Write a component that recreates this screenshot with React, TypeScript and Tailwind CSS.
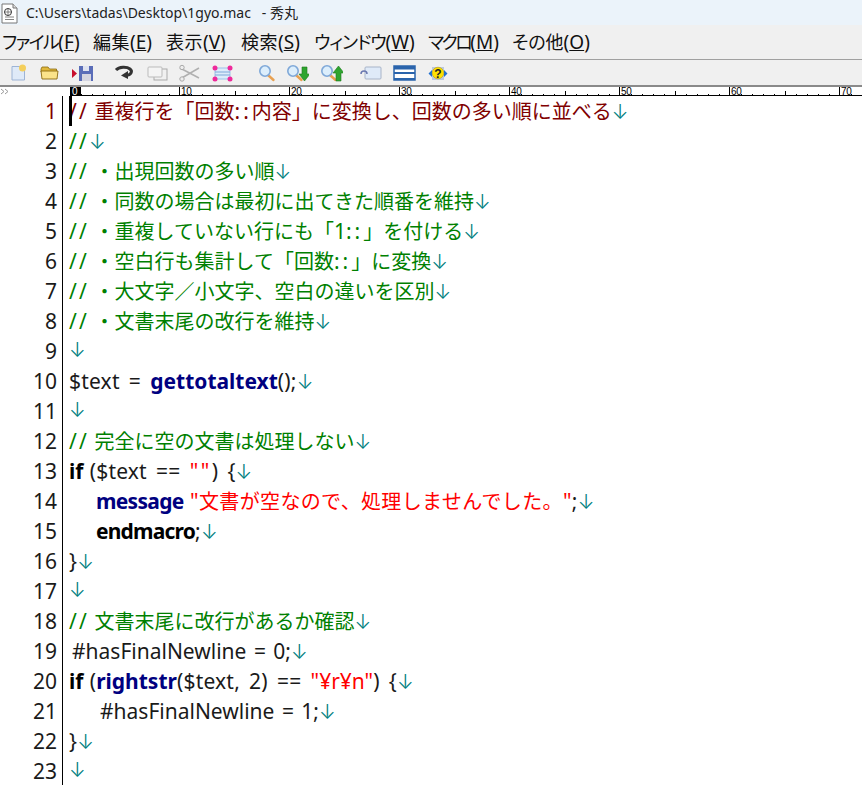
import React from "react";

const FONT = '"Noto Sans","Noto Sans CJK JP",sans-serif';

type Seg = [string, string];
const G = "text-[#008000]";
const K = "text-[#000080] font-bold";
const KM = "text-[#000080] font-bold tracking-[-0.7px]";
const T = "text-[#1a1a1a] tracking-[0.2px] [word-spacing:3.5px]";
const T0 = "text-[#1a1a1a] [word-spacing:1px]";
const TH = "text-[#1a1a1a] [word-spacing:2px]";
const B = "text-[#000] font-bold";
const BE = "text-[#000] font-bold tracking-[-0.8px]";
const R = "text-[#ff0000]";
const RE = "text-[#ff0000] tracking-[2.5px]";
const RL = "text-[#ff0000] tracking-[0.35px]";
const D = "text-[#800000]";

const rows: { segs: Seg[]; pad?: string; dark?: boolean }[] = [
  { segs: [["// 重複行を「回数::内容」に変換し、回数の多い順に並べる", D]], dark: true },
  { segs: [["//", G]] },
  { segs: [["// ・出現回数の多い順", G]] },
  { segs: [["// ・同数の場合は最初に出てきた順番を維持", G]] },
  { segs: [["// ・重複していない行にも「1::」を付ける", G]] },
  { segs: [["// ・空白行も集計して「回数::」に変換", G]] },
  { segs: [["// ・大文字／小文字、空白の違いを区別", G]] },
  { segs: [["// ・文書末尾の改行を維持", G]] },
  { segs: [] },
  { segs: [["$text = ", T], ["gettotaltext", K], ["();", T]] },
  { segs: [] },
  { segs: [["// 完全に空の文書は処理しない", G]] },
  { segs: [["if", B], [" (", T0], ["$text == ", T], ['""', RE], [") {", T]] },
  { segs: [["message", KM], [" ", T0], ['"文書が空なので、処理しませんでした。"', RL], [";", T]], pad: "pl-[27px]" },
  { segs: [["endmacro", BE], [";", T]], pad: "pl-[27px]" },
  { segs: [["}", T]] },
  { segs: [] },
  { segs: [["// 文書末尾に改行があるか確認", G]] },
  { segs: [["#hasFinalNewline = 0;", TH]], pad: "pl-[3px]" },
  { segs: [["if", B], [" (", T0], ["rightstr", K], ["($text, 2) == ", T], ['"¥r¥n"', R], [") {", T]] },
  { segs: [["#hasFinalNewline = 1;", TH]], pad: "pl-[31px]" },
  { segs: [["}", T]] },
  { segs: [] },
];

const menus: [string, string, string, string][] = [
  ["ファイル", "F", "w-[91px]", "tracking-[-1.5px]"],
  ["編集", "E", "w-[73px]", "tracking-[0.5px]"],
  ["表示", "V", "w-[75px]", "tracking-[0.5px]"],
  ["検索", "S", "w-[73px]", "tracking-[0.5px]"],
  ["ウィンドウ", "W", "w-[114px]", "tracking-[-1px]"],
  ["マクロ", "M", "w-[84px]", "tracking-[-2.5px]"],
  ["その他", "O", "w-[80px]", "tracking-normal"],
];

function Mixed({ text }: { text: string }) {
  const parts = text.match(/\/\/|::|[\x00-\x7F¥]+?(?=::|$|[^\x00-\x7F¥])|[^\x00-\x7F¥]+/g) || [];
  return (
    <>
      {parts.map((p, i) =>
        p === "//" ? (
          <span key={i} className="text-[21px] tracking-[2.2px]">{p}</span>
        ) : p === "::" ? (
          <span key={i} className="text-[21px] tracking-[3px]">{p}</span>
        ) : /^[\x00-\x7F¥]/.test(p) ? (
          <span key={i} className="text-[21px]">{p}</span>
        ) : (
          <span key={i} className="text-[20px]">{p}</span>
        )
      )}
    </>
  );
}

function Ruler() {
  const ticks = [];
  for (let i = 1; i <= 72; i++) {
    const x = 70 + i * 11;
    if (x > 862) break;
    if (i % 10 === 0) continue;
    const h = i % 5 === 0 ? 5 : 2;
    ticks.push(<line key={i} x1={x + 0.5} x2={x + 0.5} y1={9 - h} y2={9} stroke="#000" />);
  }
  const labels = [];
  for (let i = 0; i <= 70; i += 10) {
    const x = 70 + i * 11;
    labels.push(
      <g key={i}>
        {i > 0 && <line x1={x - 0.5} x2={x - 0.5} y1={0} y2={9} stroke="#000" />}
        <text x={x + (i === 0 ? 2 : 1)} y={8} fontSize="10" fill={i === 0 ? "#fff" : "#000"} fontFamily="Liberation Sans" letterSpacing="-0.3">
          {i}
        </text>
      </g>
    );
  }
  return (
    <svg width="862" height="9" className="block">
      <rect x="70" y="0" width="11" height="9" fill="#000" />
      <line x1="70" x2="862" y1="8.5" y2="8.5" stroke="#000" />
      {ticks}
      {labels}
      <path d="M1 2l3 2.500-3 2.500M5 2l3 2.500-3 2.500" fill="none" stroke="#999" />
    </svg>
  );
}

const Ic = ({ children, ml }: { children: React.ReactNode; ml: string }) => (
  <svg width="24" height="24" viewBox="0 0 24 24" className={`block shrink-0 ${ml}`}>
    {children}
  </svg>
);

const Mag = ({ x = 0 }: { x?: number }) => (
  <g transform={`translate(${x} 0)`}>
    <line x1="13.5" y1="14.5" x2="18.5" y2="19" stroke="#e8a050" strokeWidth="2.4" strokeLinecap="round" />
    <circle cx="10" cy="10" r="5.2" fill="#dceefc" stroke="#7fa8d8" strokeWidth="1.6" />
  </g>
);

function Toolbar() {
  return (
    <div className="flex h-[25px] items-center bg-[#f0f0f0]">
      <Ic ml="ml-[6px]">
        <path d="M6 5.500h9l3.500 3v10.500H6z" fill="#dfeaf8" stroke="#9db4d6" />
        <circle cx="16.500" cy="7" r="3.500" fill="#f4cf5c" />
      </Ic>
      <Ic ml="ml-[8px]">
        <path d="M3 8l1-2h6l1.500 2h7v3H3z" fill="#e0b83c" stroke="#8a6a10" strokeWidth=".8" />
        <path d="M3 10h17l-1 8H4z" fill="#fbe38a" stroke="#8a6a10" strokeWidth=".9" />
      </Ic>
      <Ic ml="ml-[10px]">
        <path d="M0 8l5 4.500-5 4.500z" fill="#c8102e" />
        <path d="M7 5h14v15H7z" fill="#5a6db8" />
        <rect x="11" y="5" width="6" height="5" fill="#dfe3f0" />
        <rect x="10" y="13" width="9" height="7" fill="#d5d5e0" />
      </Ic>
      <Ic ml="ml-[16px]">
        <path d="M4 9c3-3.500 11-3.500 14-1 3 2.500 1 6-4 6.500" fill="none" stroke="#333" strokeWidth="3" />
        <path d="M16 10v8l-7-3.500z" fill="#333" />
      </Ic>
      <Ic ml="ml-[9px]">
        <rect x="9" y="8" width="13" height="11" fill="#f0f0f0" stroke="#aaa" />
        <rect x="3" y="6" width="14" height="10" rx="1" fill="#f4f4f4" stroke="#bbb" />
      </Ic>
      <Ic ml="ml-[9px]">
        <path d="M2 7l19 10M2 18l19-11" stroke="#b0b0b0" strokeWidth="1.500" />
        <circle cx="4" cy="6.500" r="2.200" fill="#eee" stroke="#aaa" />
        <circle cx="4" cy="18" r="2.200" fill="#eee" stroke="#aaa" />
      </Ic>
      <Ic ml="ml-[8px]">
        <rect x="5" y="7" width="15" height="11" fill="#dcecfb" stroke="#9cc0e8" />
        <path d="M5 11h15M5 14h15" stroke="#7fa8d8" />
        <g fill="#ee2a9a">
          <circle cx="5" cy="7" r="2.500" />
          <circle cx="20" cy="7" r="2.500" />
          <circle cx="5" cy="18" r="2.500" />
          <circle cx="20" cy="18" r="2.500" />
        </g>
      </Ic>
      <Ic ml="ml-[19px]"><Mag x={2} /></Ic>
      <Ic ml="ml-[8px]">
        <Mag x={-2} />
        <path d="M17 6h5v7h3l-5.500 7L14 13h3z" fill="#2fa52f" stroke="#1c7a1c" strokeWidth=".6" />
      </Ic>
      <Ic ml="ml-[10px]">
        <Mag x={-2} />
        <path d="M17 20h5v-8h3l-5.500-7L14 12h3z" fill="#2fa52f" stroke="#1c7a1c" strokeWidth=".6" />
      </Ic>
      <Ic ml="ml-[16px]">
        <rect x="6" y="6" width="16" height="12" rx="1" fill="#dfeaf8" stroke="#a8b4c8" />
        <path d="M2 13c0-4 6-4 6 0" fill="none" stroke="#6a78b0" strokeWidth="1.500" />
      </Ic>
      <Ic ml="ml-[10px]">
        <rect x="1" y="5" width="21" height="14" fill="#fff" stroke="#2a64ac" strokeWidth="1.500" />
        <rect x="1" y="5" width="21" height="3.500" fill="#2a64ac" />
        <rect x="1" y="11" width="21" height="2" fill="#2a64ac" />
        <rect x="1" y="17" width="21" height="2" fill="#2a64ac" />
      </Ic>
      <Ic ml="ml-[9px]">
        <rect x="6" y="6" width="12" height="13" fill="#bcc8dc" />
        <path d="M6 9l-3.500 3.500L6 16zM18 9l3.500 3.500L18 16z" fill="#1f6fd0" />
        <circle cx="12" cy="12" r="5.800" fill="#ffe100" stroke="#b09000" strokeWidth=".5" />
        <text x="12" y="16.500" textAnchor="middle" fontSize="12" fontWeight="700" fill="#222" fontFamily="Liberation Sans">?</text>
      </Ic>
    </div>
  );
}

export default function App() {
  return (
    <div className="relative h-[785px] w-[862px] overflow-hidden bg-white" style={{ fontFamily: FONT }}>
      <div className="flex h-[25px] items-center bg-[#ebf3fa]">
        <svg width="18" height="22" viewBox="0 0 18 22" className="ml-[1px] shrink-0">
          <path d="M1 2h11l4 4v15H1z" fill="#fff" stroke="#777" />
          <path d="M12 2v4h4" fill="#ddd" stroke="#777" />
          <circle cx="7" cy="10" r="3.500" fill="none" stroke="#333" />
          <path d="M4 10h6M7 7v6M4 15h9M4 17.500h9" stroke="#666" strokeWidth=".8" />
        </svg>
        <span className="ml-[7px] whitespace-pre text-[14px] leading-none text-[#222]">C:\Users\tadas\Desktop\1gyo.mac   - 秀丸</span>
      </div>
      <div className="flex h-[34px] items-center bg-[#f0f0f0] pl-[2px] text-[18px] leading-none text-[#111]">
        {menus.map(([m, k, w, tr]) => (
          <span key={k} className={`${w} shrink-0 whitespace-pre [font-feature-settings:'palt']`}>
            <span className={tr}>{m}</span>
            <span className="text-[19px]">(<span className="underline">{k}</span>)</span>
          </span>
        ))}
      </div>
      <div className="h-[1px] bg-[#a0a0a0]" />
      <Toolbar />
      <div className="h-[2px] bg-[#8a8a8a]" />
      <Ruler />
      <div className="relative">
        {rows.map((r, i) => (
          <div key={i} className="flex h-[30px] items-center leading-none">
            <div className={`w-[57px] shrink-0 text-right text-[21px] ${r.dark ? "text-[#800000]" : "text-[#1a1a1a]"}`}>{i + 1}</div>
            <div className="ml-[5px] h-[30px] w-[1px] shrink-0 bg-black" />
            <div className={`ml-[6px] whitespace-pre ${r.pad ?? ""}`}>
              {r.segs.map(([t, c], j) => (
                <span key={j} className={c}><Mixed text={t} /></span>
              ))}
              <span className="font-['Inter'] text-[20px] font-light leading-[0] text-[#008080]">↓</span>
            </div>
          </div>
        ))}
        <div className="absolute left-[69px] top-0 h-[30px] w-[3px] bg-black" />
      </div>
    </div>
  );
}
